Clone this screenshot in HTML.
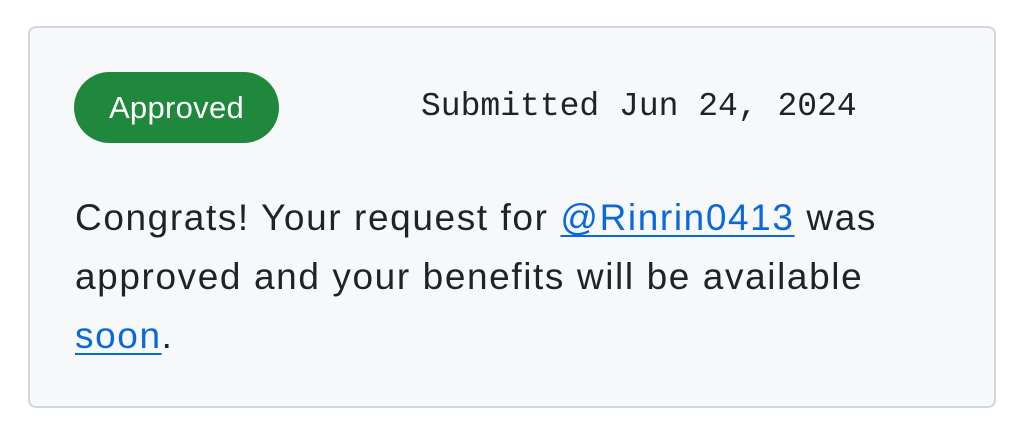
<!DOCTYPE html>
<html><head><meta charset="utf-8"><style>
html,body{margin:0;padding:0;background:#fff;width:1024px;height:446px;overflow:hidden}
.card{position:absolute;left:28px;top:26px;width:968px;height:382px;border:2px solid #d0d7de;border-radius:8px;background:#f6f8fa;box-sizing:border-box}
.badge{position:absolute;left:74px;top:72px;width:205px;height:71px;border-radius:36px;background:#1f883d;color:#fff;font:31px "Liberation Sans",sans-serif;display:flex;align-items:center;justify-content:center;letter-spacing:0.3px}
.sub{position:absolute;left:421px;top:88px;font:33px "Liberation Mono",monospace;color:#1f2328;white-space:nowrap}
.body{position:absolute;left:75px;top:188px;font:37px/59px "Liberation Sans",sans-serif;color:#1f2328;letter-spacing:1.6px;white-space:nowrap}
a{color:#0969da;text-decoration:underline;text-underline-offset:5px;text-decoration-thickness:2px}
</style></head><body>
<div class="card"></div>
<div class="badge">Approved</div>
<div class="sub">Submitted Jun 24, 2024</div>
<div class="body">Congrats! Your request for <a>@Rinrin0413</a> was<br>approved and your benefits will be available<br><a>soon</a>.</div>
</body></html>
